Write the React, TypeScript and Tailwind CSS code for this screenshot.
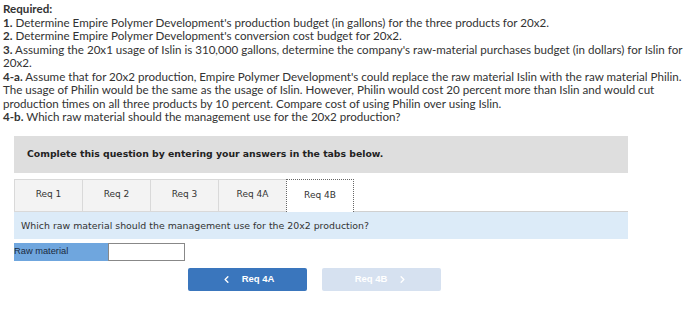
import { ChevronLeft, ChevronRight } from "lucide-react"

const tabs = ["Req 1", "Req 2", "Req 3", "Req 4A", "Req 4B"]

const App = () => {
  return (
    <div className="w-[700px] h-[322px] bg-white overflow-hidden">
      {/* Question text */}
      <div className="pl-[3px] pr-[6px] pt-[2px] text-[11.6px] leading-[13.5px] text-[#333] font-['Lato',sans-serif]">
        <p className="font-bold">Required:</p>
        <p><b>1.</b> Determine Empire Polymer Development's production budget (in gallons) for the three products for 20x2.</p>
        <p><b>2.</b> Determine Empire Polymer Development's conversion cost budget for 20x2.</p>
        <p><b>3.</b> Assuming the 20x1 usage of Islin is 310,000 gallons, determine the company's raw-material purchases budget (in dollars) for Islin for 20x2.</p>
        <p><b>4-a.</b> Assume that for 20x2 production, Empire Polymer Development's could replace the raw material Islin with the raw material Philin. The usage of Philin would be the same as the usage of Islin. However, Philin would cost 20 percent more than Islin and would cut production times on all three products by 10 percent. Compare cost of using Philin over using Islin.</p>
        <p><b>4-b.</b> Which raw material should the management use for the 20x2 production?</p>
      </div>

      <div className="ml-[14px] w-[614px] mt-[12px] [font-family:'DejaVu_Sans',Verdana,sans-serif]">
        {/* Instruction box */}
        <div className="h-[37px] bg-[#dedede] flex items-center pl-[13px] text-[9.3px] font-bold text-[#222]">
          Complete this question by entering your answers in the tabs below.
        </div>

        {/* Tabs */}
        <div className="mt-[6px] flex h-[33px]">
          {tabs.map((t, i) =>
            i === 4 ? (
              <div key={t} className="w-[68px] flex items-center justify-center bg-white border border-dotted border-[#666] border-b-0 text-[9px] text-[#333]">
                {t}
              </div>
            ) : (
              <div key={t} className="w-[68px] flex items-center justify-center bg-[#f3f3f3] border border-[#d9d9d9] border-r-0 text-[9px] text-[#333]">
                {t}
              </div>
            )
          )}
          <div className="flex-1 border-b border-[#d0d0d0]" />
        </div>

        {/* Question bar */}
        <div className="h-[27px] bg-[#dcebf8] flex items-center pl-[7px] pt-[2px] text-[9.4px] text-[#333]">
          Which raw material should the management use for the 20x2 production?
        </div>

        {/* Answer row */}
        <div className="mt-[4px] flex h-[18px]">
          <div className="w-[94px] bg-[#6fa6de] flex items-center text-[9.3px] text-[#1a2a40] [font-family:'Liberation_Sans',Arial,sans-serif]">
            Raw material
          </div>
          <div className="w-[77px] bg-white border border-[#888]" />
        </div>

        {/* Nav buttons */}
        <div className="mt-[7px] flex gap-[15px] pl-[174px] [font-family:'Liberation_Sans',Arial,sans-serif]">
          <button className="w-[119px] h-[23px] rounded-[2px] bg-[#3a76bd] text-white text-[9.5px] font-bold flex items-center justify-center gap-[10px]">
            <ChevronLeft size={11} strokeWidth={3} />
            Req 4A
          </button>
          <button className="w-[119px] h-[23px] rounded-[2px] bg-[#d6e1f0] text-white text-[9.5px] font-bold flex items-center justify-center gap-[10px]">
            Req 4B
            <ChevronRight size={11} strokeWidth={3} />
          </button>
        </div>
      </div>
    </div>
  )
}

export default App
